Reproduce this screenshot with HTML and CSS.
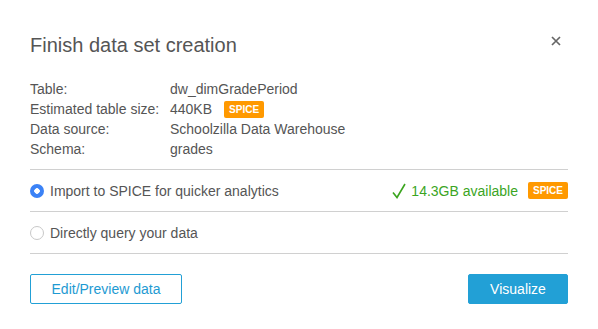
FILE: index.html
```html
<!DOCTYPE html>
<html lang="en">
  <head>
    <meta charset="UTF-8" />
    <title>Finish data set creation</title>
    <link rel="stylesheet" href="styles.css">
  </head>
  <body>
    <div class="modal">
      <div class="header">
        <h1 class="title">Finish data set creation</h1>
        <svg class="close" width="10" height="10" viewBox="0 0 10 10">
          <path d="M1 1 L9 9 M9 1 L1 9" stroke="#666" stroke-width="1.7" />
        </svg>
      </div>

      <div class="details">
        <div class="label">Table:</div>
        <div class="value">dw_dimGradePeriod</div>
        <div class="label">Estimated table size:</div>
        <div class="value">440KB <span class="badge">SPICE</span></div>
        <div class="label">Data source:</div>
        <div class="value">Schoolzilla Data Warehouse</div>
        <div class="label">Schema:</div>
        <div class="value">grades</div>
      </div>

      <div class="options">
        <label class="option">
          <span class="radio checked"></span>
          <span class="option-text">Import to SPICE for quicker analytics</span>
          <span class="available">
            <svg width="14" height="16" viewBox="0 0 14 16">
              <path d="M1 9.5 L5 14.5 L13 1" fill="none" stroke="#3ba51f" stroke-width="1.6" />
            </svg>
            14.3GB available
          </span>
          <span class="badge">SPICE</span>
        </label>
        <label class="option">
          <span class="radio"></span>
          <span class="option-text">Directly query your data</span>
        </label>
      </div>

      <div class="footer">
        <button class="btn btn-outline">Edit/Preview data</button>
        <button class="btn btn-primary">Visualize</button>
      </div>
    </div>
  </body>
</html>
```

FILE: styles.css
```css
body {
  margin: 0;
  background: #fff;
  font-family: "Liberation Sans", Arial, sans-serif;
  color: #555;
}

.modal {
  width: 538px;
  padding: 30px 30px 26px;
}

.header {
  display: flex;
  justify-content: space-between;
  align-items: flex-start;
}

.title {
  margin: 0;
  font-size: 20px;
  font-weight: normal;
  line-height: 30px;
  color: #555;
}

.close {
  margin: 6px 7px 0 0;
}

.details {
  display: grid;
  grid-template-columns: 140px 1fr;
  margin-top: 19px;
  font-size: 14px;
  line-height: 20px;
}

.value {
  display: flex;
  align-items: center;
  gap: 12px;
}

.badge {
  display: inline-block;
  background: #f90;
  color: #fff;
  font-size: 10px;
  font-weight: bold;
  line-height: 17px;
  padding: 0 5px;
  border-radius: 2px;
}

.options {
  margin-top: 10px;
  border-top: 1px solid #d0d0d0;
}

.option {
  display: flex;
  align-items: center;
  height: 41px;
  border-bottom: 1px solid #d0d0d0;
  font-size: 14px;
}

.radio {
  width: 12px;
  height: 12px;
  border: 1px solid #c8c8c8;
  border-radius: 50%;
  margin-right: 6px;
  box-sizing: content-box;
}

.radio.checked {
  width: 14px;
  height: 14px;
  border: none;
  background: radial-gradient(circle, #fff 0 2.5px, #3b82f6 3px);
}

.option-text {
  flex: 1;
}

.available {
  display: flex;
  align-items: center;
  gap: 5px;
  color: #3ba51f;
  font-size: 14px;
  margin-right: 10px;
}

.footer {
  display: flex;
  justify-content: space-between;
  margin-top: 20px;
}

.btn {
  font-family: inherit;
  font-size: 14px;
  height: 30px;
  border-radius: 2px;
}

.btn-outline {
  width: 152px;
  background: #fff;
  border: 1px solid #22a0d6;
  color: #1e9ad2;
}

.btn-primary {
  width: 100px;
  background: #22a0d6;
  border: 1px solid #22a0d6;
  color: #fff;
}
```
